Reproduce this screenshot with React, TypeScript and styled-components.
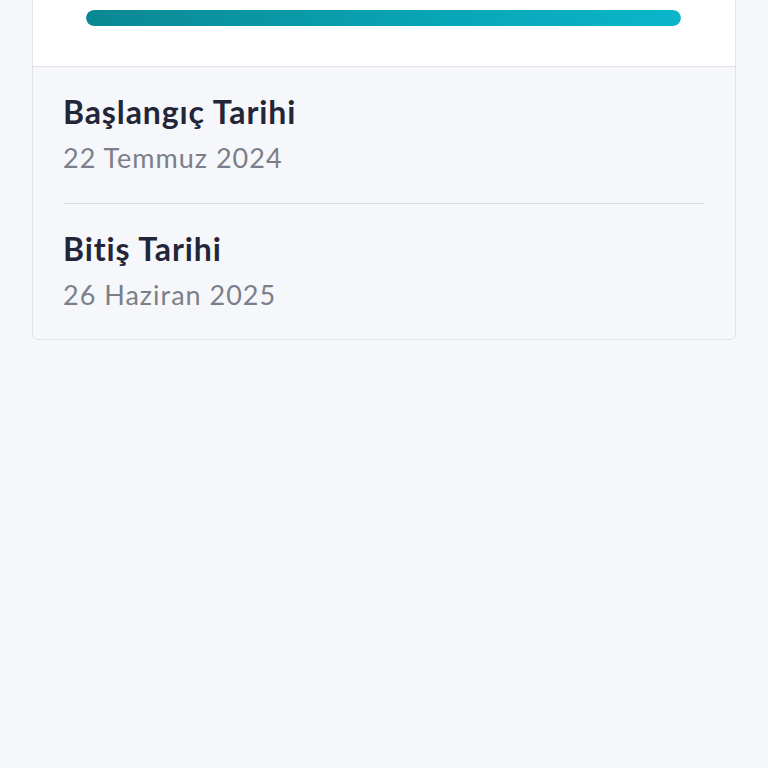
import styled, { createGlobalStyle } from "styled-components";

const GlobalStyle = createGlobalStyle`
  html, body {
    margin: 0;
    padding: 0;
    background: #f6f7fa;
    font-family: Lato, "Noto Sans", sans-serif;
  }
`;

const Page = styled.div`
  padding: 0 32px;
  margin-top: -31px;
`;

const Card = styled.div`
  border: 1px solid #e0e2e7;
  border-radius: 6px;
  background: #f6f7fa;
`;

const ProgressArea = styled.div`
  background: #ffffff;
  padding: 40px 54px 40px 53px;
  border-bottom: 1px solid #e0e2e7;
  border-radius: 6px 6px 0 0;
`;

const Track = styled.div`
  height: 16px;
  border-radius: 8px;
  background: #e6eaee;
  overflow: hidden;
`;

const Fill = styled.div`
  height: 100%;
  border-radius: 8px;
  background: linear-gradient(90deg, #0a8893 0%, #08a6b6 60%, #0ab6ca 100%);
`;

const DateList = styled.div`
  padding: 0 30px 0 30px;
`;

const DateItem = styled.div<{ $last?: boolean }>`
  padding: 25px 0 ${(p) => (p.$last ? "27px" : "28px")};
  border-bottom: ${(p) => (p.$last ? "none" : "1px solid #dcdfe4")};
`;

const Label = styled.div`
  font-size: 32px;
  font-weight: 700;
  color: #232639;
  line-height: 40px;
  letter-spacing: 0.9px;
`;

const Value = styled.div`
  font-size: 27px;
  color: #7b7f8b;
  line-height: 34px;
  margin-top: 9px;
  letter-spacing: 1px;
`;

const dates = [
  { label: "Başlangıç Tarihi", value: "22 Temmuz 2024" },
  { label: "Bitiş Tarihi", value: "26 Haziran 2025" },
];

export default function App() {
  const progress = 100;
  return (
    <>
      <GlobalStyle />
      <Page>
        <Card>
          <ProgressArea>
            <Track>
              <Fill style={{ width: `${progress}%` }} />
            </Track>
          </ProgressArea>
          <DateList>
            {dates.map((d, i) => (
              <DateItem key={d.label} $last={i === dates.length - 1}>
                <Label>{d.label}</Label>
                <Value>{d.value}</Value>
              </DateItem>
            ))}
          </DateList>
        </Card>
      </Page>
    </>
  );
}
